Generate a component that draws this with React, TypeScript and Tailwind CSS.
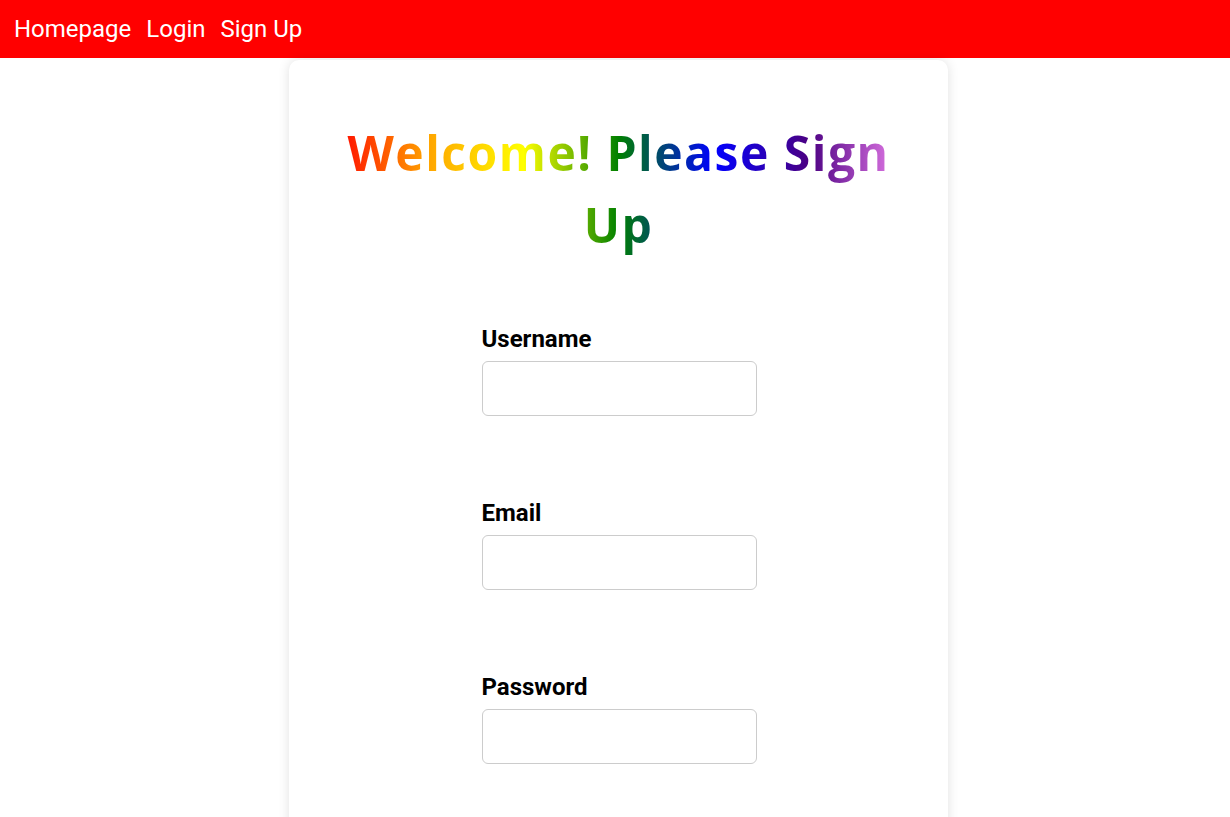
import React from "react"

const fields = [
  { id: "username", label: "Username", type: "text" },
  { id: "email", label: "Email", type: "email" },
  { id: "password", label: "Password", type: "password" },
]

export default function App() {
  return (
    <div className="min-h-screen bg-white font-['Roboto',sans-serif]">
      {/* Navbar */}
      <nav className="h-[58px] bg-[#ff0000] flex items-center px-[14px] gap-[15px] text-white text-[24px]">
        <a href="#" className="leading-none">Homepage</a>
        <a href="#" className="leading-none">Login</a>
        <a href="#" className="leading-none">Sign Up</a>
      </nav>

      {/* Card */}
      <div className="flex justify-center pl-[7px]">
        <div className="w-[659px] mt-[2px] min-h-[760px] bg-white rounded-[10px] shadow-[0_0_12px_rgba(0,0,0,0.12)] px-[44px] pt-[57px]">
          <h1 className="text-center text-[48px] leading-[72px] font-bold tracking-[1.5px] font-['Open_Sans',sans-serif] bg-[linear-gradient(to_right,#ff0000,#ffa500,#ffff00,#008000,#0000ff,#4b0082,#ee82ee)] bg-clip-text text-transparent">
            Welcome! Please Sign Up
          </h1>

          <form className="w-[275px] mx-auto mt-[64px] pl-px box-content">
            {fields.map((f) => (
              <div key={f.id} className="mb-[83px]">
                <label htmlFor={f.id} className="block text-[24px] font-bold leading-[28px] text-black mb-[8px]">
                  {f.label}
                </label>
                <input
                  id={f.id}
                  type={f.type}
                  className="block w-[275px] h-[55px] border border-[#cccccc] rounded-[6px] px-3 outline-none"
                />
              </div>
            ))}
          </form>
        </div>
      </div>
    </div>
  )
}
